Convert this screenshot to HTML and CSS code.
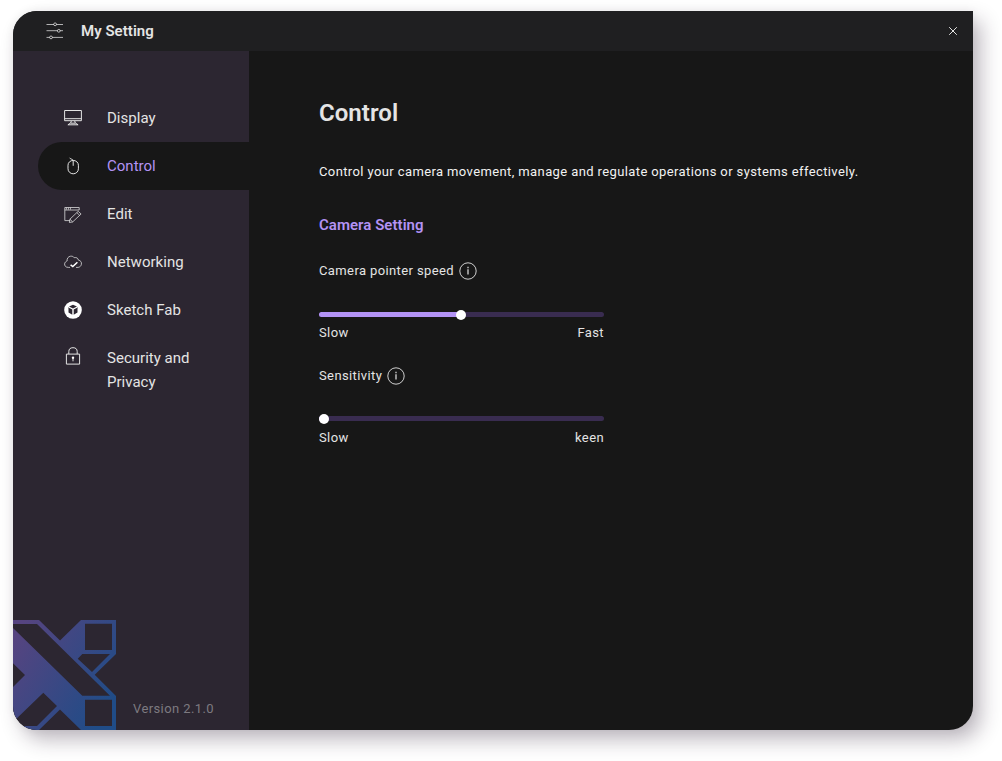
FILE: index.html
```html
<!DOCTYPE html>
<html lang="en">
<head>
<meta charset="utf-8">
<title>My Setting</title>
<link rel="stylesheet" href="styles.css">
</head>
<body>
<div class="window">
  <header class="titlebar">
    <svg class="sliders" width="18" height="18" viewBox="0 0 18 18"><path d="M.5 2.5H8M10.2 2.5H17M.5 8.7h11.2M13.9 8.7H17M.5 15.4h3.4M6.1 15.4H17"/><circle cx="9.1" cy="2.3" r="1.4"/><circle cx="12.8" cy="8.8" r="1.4"/><circle cx="5" cy="15.4" r="1.4"/></svg>
    <h2 class="window-title">My Setting</h2>
    <svg class="close" width="10" height="10" viewBox="0 0 10 10"><path d="M1.2 1.2l7.6 7.6M8.8 1.2L1.2 8.8"/></svg>
  </header>
  <div class="body">
    <aside class="sidebar">
      <nav class="menu">
        <a class="item"><svg class="icon" viewBox="0 0 18 18"><path d="M.6 1.5h16.8v10.2H.6zM.6 9.7h16.8M7.3 12l-.6 2M10.7 12l.6 2M3.9 15.8l2.4-1.6h5.4l2.4 1.6z"/></svg><span>Display</span></a>
        <a class="item active"><svg class="icon" viewBox="0 0 18 18"><path d="M4 8.2a5 4.6 0 0 1 10.4 0v3.6a5.2 5 0 0 1-10.4 0zM9.2 8.8V3.6C8.8 1.8 6.3 2.5 5.7.8"/></svg><span>Control</span></a>
        <a class="item"><svg class="icon thin" viewBox="0 0 18 18"><path d="M6 15.6H.8V2.5h14.4V5M.8 5h14.4M2.4 2.7v1.9M4.4 2.7v1.9M6.4 2.7v1.9M5.9 14.2l8.3-7.9 2.9 2.7-8.4 7.9-3.3.6zM12.8 7.6l2.9 2.7M5.9 14.2l2.8 2.7"/></svg><span>Edit</span></a>
        <a class="item"><svg class="icon thin" viewBox="0 0 18 18"><path d="M6 14.4H4.4C1.5 14.4.5 12.6.6 10.9c.2-1.6 1.3-2.5 2.5-2.9C2.8 5.5 4.2 3.5 6.6 3.2c1.7-.2 2.8.4 3.7 1.5 2-.5 3.8.3 4.1 2.4 2.3.4 3.4 2.2 3 4.1-.3 1.8-1.4 2.8-3.2 3.2H12"/><path class="check" d="M6.6 11.8l2.2 1.8 4.6-4.3"/></svg><span>Networking</span></a>
        <a class="item"><svg class="icon" viewBox="0 0 18 18"><circle class="disc" cx="9" cy="9" r="8.8"/><path class="cut" d="M3.9 6.3l4.4 2.3v5.2l-3.8-2.2V7.6M14.1 6.3L9.7 8.6v5.2l3.8-2.2V7.6M5 5.4L9 3.7l4 1.7-4 2.1z"/></svg><span>Sketch Fab</span></a>
        <a class="item tall"><svg class="icon" viewBox="0 0 18 18"><path d="M2.4 7.1h13.2v10H2.4zM4.8 7V4.7a4.2 4 0 0 1 8.4 0V7M9 11.5v2.8"/><circle class="disc" cx="9" cy="10.8" r="1.2"/></svg><span>Security and Privacy</span></a>
      </nav>
      <footer class="brand">
        <svg class="logo" width="103" height="110" viewBox="0 0 103 110">
          <defs><linearGradient id="fade" gradientUnits="userSpaceOnUse" x1="-8" y1="32" x2="92" y2="92"><stop offset="0" stop-color="#564480"/><stop offset="1" stop-color="#204c87"/></linearGradient></defs>
          <path fill="url(#fade)" fill-rule="evenodd" d="M0 0H26L47 20.5 68 0h35v34L81.7 54.7 103 76v34H68L47 89.5 26 110H0V67l12-12L0 43.3zM0 4v4l69.3 67.8H97L24 4zM72 3.8V30h27V3.8zM72 79.8V106h27V79.8zM69.3 34l-4.6 4.7L79 52 97 34zM30.3 72.7L0 102v4h24l20-20z"/>
        </svg>
        <span class="version">Version 2.1.0</span>
      </footer>
    </aside>
    <main class="content">
      <h1 class="heading">Control</h1>
      <p class="intro">Control your camera movement, manage and regulate operations or systems effectively.</p>
      <h3 class="section">Camera Setting</h3>
      <div class="setting">
        <div class="label"><span>Camera pointer speed</span><svg class="info" width="18" height="18" viewBox="0 0 18 18"><circle cx="9" cy="9" r="8.2"/><path class="info-mark" d="M9 7.3v5.2M9 4.8v1.4"/></svg></div>
        <div class="track"><div class="fill" style="width:50%"></div><div class="thumb"></div></div>
        <div class="range"><span>Slow</span><span>Fast</span></div>
      </div>
      <div class="setting second">
        <div class="label"><span>Sensitivity</span><svg class="info" width="18" height="18" viewBox="0 0 18 18"><circle cx="9" cy="9" r="8.2"/><path class="info-mark" d="M9 7.3v5.2M9 4.8v1.4"/></svg></div>
        <div class="track"><div class="fill" style="width:2%"></div><div class="thumb"></div></div>
        <div class="range"><span>Slow</span><span>keen</span></div>
      </div>
    </main>
  </div>
</div>
</body>
</html>
```
FILE: styles.css
```css
* { box-sizing: border-box; }
body { margin: 0; padding: 11px 0 0 13px; height: 761px; overflow: hidden; background: #fff; font-family: Roboto, sans-serif; color: #e4e4e4; }
h1, h2, h3, p { margin: 0; }
svg { fill: none; stroke: #e4e4e4; flex: none; }
.window { width: 960px; height: 719px; display: flex; flex-direction: column; border-radius: 24px 0 24px 24px; background: #171717; overflow: hidden; box-shadow: 8px 10px 20px rgba(44, 27, 49, .3), 0 0 10px rgba(0, 0, 0, .06); }
.titlebar { height: 40px; display: flex; align-items: center; padding: 0 15px 0 33px; background: #1f1f21; }
.sliders { margin-right: 17px; stroke-width: .75; }
.window-title { font-size: 15px; line-height: 20px; font-weight: 600; letter-spacing: .04px; }
.close { margin-left: auto; stroke-width: 1; }
.body { flex: 1; display: flex; min-height: 0; }
.sidebar { width: 236px; display: flex; flex-direction: column; justify-content: space-between; background: #2c2631; }
.menu { display: flex; flex-direction: column; padding: 43px 0 0 25px; }
.item { height: 48px; display: flex; align-items: center; gap: 25px; padding-left: 26px; font-size: 15px; line-height: 24px; letter-spacing: .02px; }
.item.active { background: #171717; color: #b393f5; border-radius: 24px 0 0 24px; }
.item.tall { height: 72px; padding-right: 40px; }
.item.tall .icon { margin-bottom: 29px; }
.icon { width: 18px; height: 18px; stroke-width: 1; }
.icon.thin { stroke-width: .75; }
.check { stroke: #fff; stroke-width: 1.5; }
.disc { fill: #fff; stroke: none; }
.cut { fill: #2c2631; stroke: none; }
.brand { display: flex; align-items: flex-end; gap: 17px; }
.logo { stroke: none; }
.version { color: #7d7a80; font-size: 13px; line-height: 20px; letter-spacing: .4px; margin-bottom: 11px; }
.content { flex: 1; padding: 48px 70px; }
.heading { font-size: 24px; line-height: 28px; font-weight: 600; letter-spacing: .05px; }
.intro { margin-top: 35px; font-size: 13px; line-height: 20px; letter-spacing: .39px; color: #f2f2f2; white-space: nowrap; }
.section { margin: 33px 0 26px; font-size: 15px; line-height: 20px; font-weight: 600; letter-spacing: .04px; color: #b393f5; }
.setting { width: 285px; height: 105px; font-size: 13px; letter-spacing: .39px; line-height: 20px; }
.label { height: 20px; display: flex; align-items: center; gap: 5px; }
.info { stroke-width: .9; }
.info-mark { stroke-width: 1.2; }
.track { height: 5px; display: flex; align-items: center; margin-top: 31px; background: #392c50; border-radius: 3px; }
.fill { height: 5px; background: #b393f5; border-radius: 3px 0 0 3px; }
.thumb { width: 10px; height: 10px; flex: none; margin-left: -5.6px; border-radius: 50%; background: #fff; }
.range { display: flex; justify-content: space-between; margin-top: 6px; }
.second .track { margin-top: 30px; }
.second .range { margin-top: 7px; }
```
